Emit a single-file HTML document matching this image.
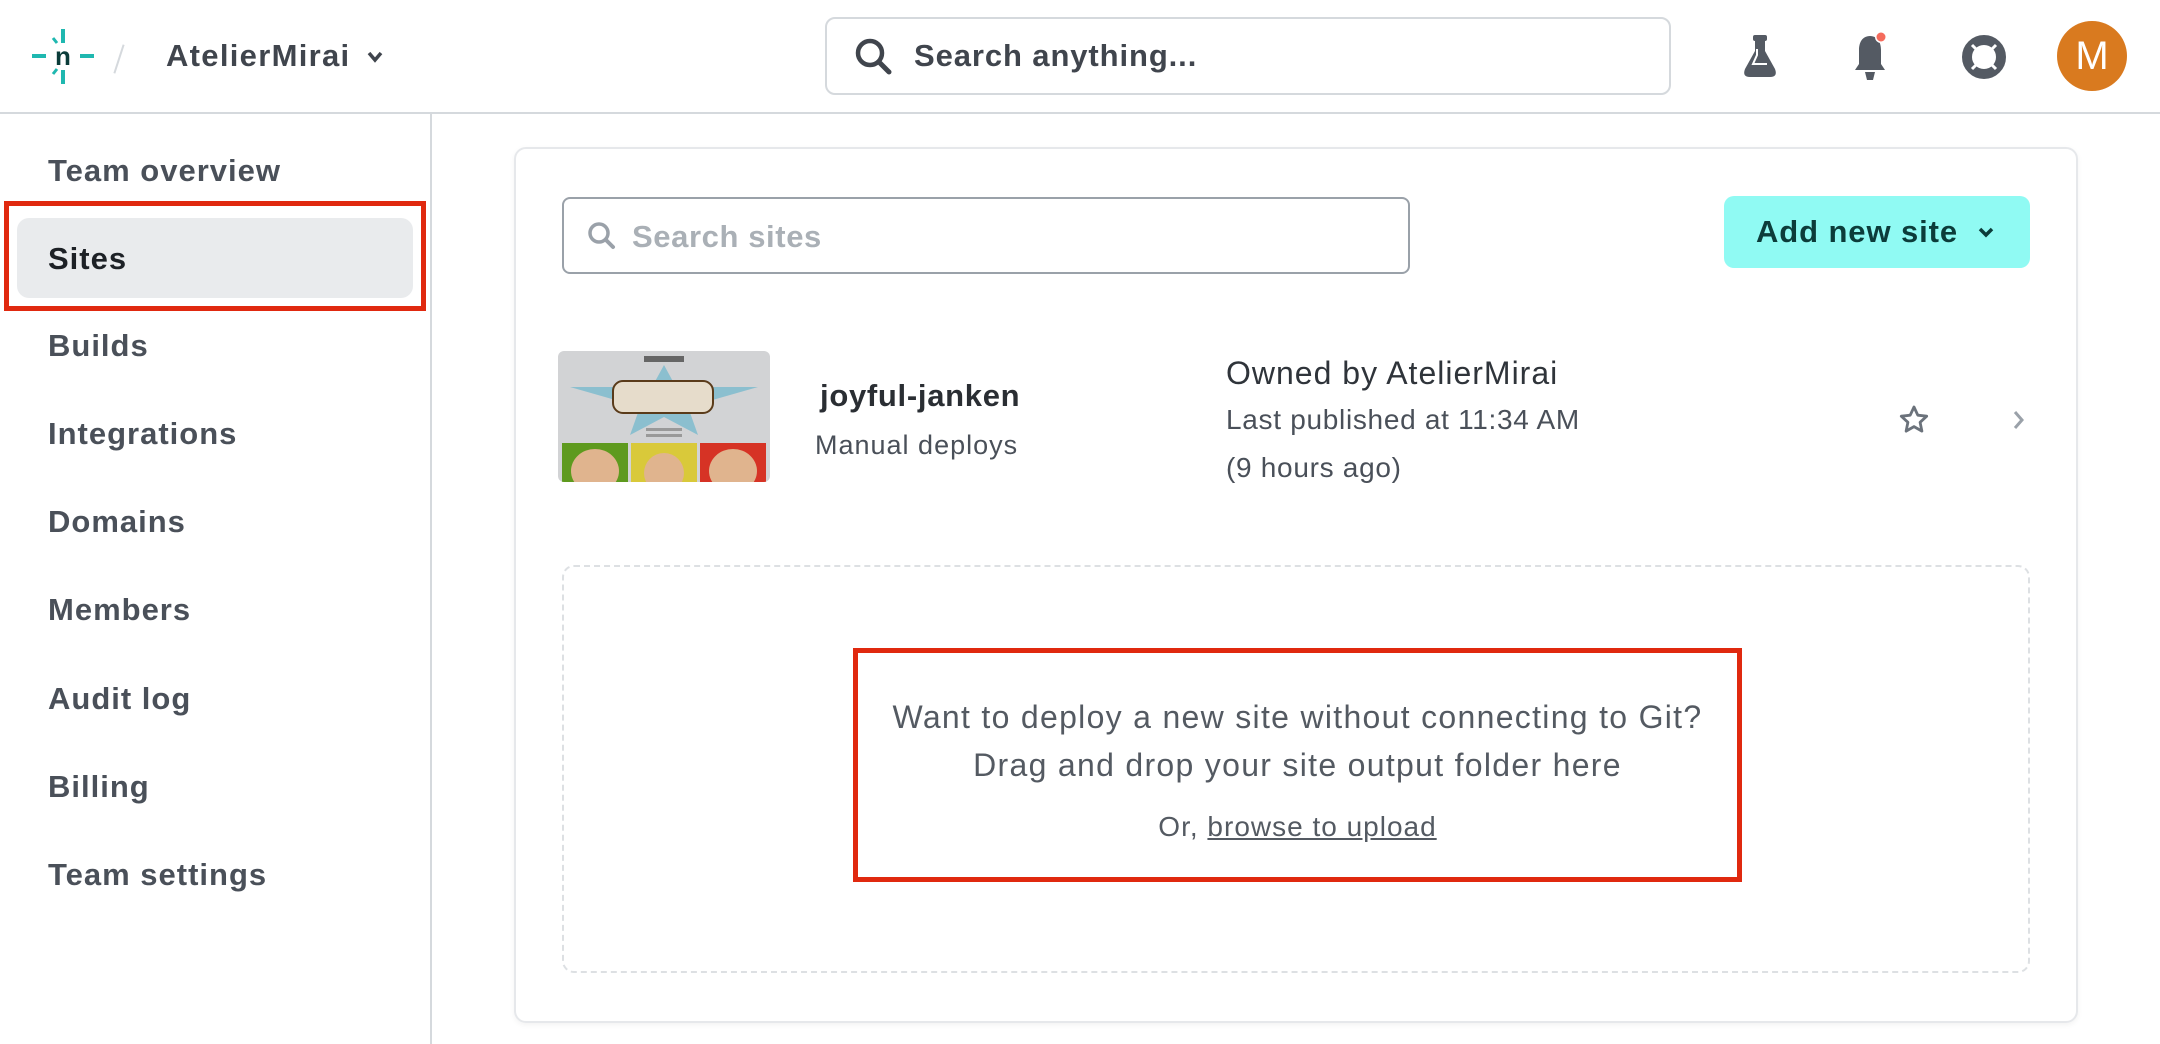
<!DOCTYPE html>
<html><head><meta charset="utf-8"><style>
*{margin:0;padding:0;box-sizing:border-box}
body{width:2160px;height:1044px;background:#fff;font-family:"Liberation Sans",sans-serif;position:relative;overflow:hidden;color:#4a5059}
.a{position:absolute;white-space:nowrap}
.nav{position:absolute;left:48px;font-size:31px;letter-spacing:1px;font-weight:bold;color:#4a5059;line-height:36px}
</style></head><body>
<!-- header -->
<div class="a" style="left:0;top:112px;width:2160px;height:2px;background:#d5d9dd"></div>
<svg class="a" style="left:30px;top:26px" width="66" height="60" viewBox="0 0 66 60">
<rect x="31" y="3" width="4" height="14" fill="#1fb8b0"/><rect x="31" y="44" width="4" height="14" fill="#1fb8b0"/>
<rect x="2" y="28" width="14" height="4" fill="#1fb8b0"/><rect x="50" y="28" width="14" height="4" fill="#1fb8b0"/>
<path d="M23 12l4 5M23 48l4-5" stroke="#1fb8b0" stroke-width="3"/>
<text x="33" y="39" text-anchor="middle" font-family="Liberation Sans" font-weight="bold" font-size="26" fill="#0b3c3a">n</text>
</svg>
<div class="a" style="left:118px;top:44px;width:2px;height:30px;background:#d5d9dd;transform:rotate(18deg)"></div>
<div class="a" style="left:166px;top:38px;font-size:31px;letter-spacing:1.3px;font-weight:bold;color:#40454d">AtelierMirai</div>
<svg class="a" style="left:366px;top:50px" width="18" height="14"><path d="M3 3l6 7 6-7" stroke="#40454d" stroke-width="3.5" fill="none"/></svg>
<div class="a" style="left:825px;top:17px;width:846px;height:78px;border:2px solid #d5d9dd;border-radius:10px"></div>
<svg class="a" style="left:852px;top:35px" width="44" height="44" viewBox="0 0 44 44"><circle cx="18" cy="18" r="12" stroke="#40454d" stroke-width="4.5" fill="none"/><path d="M27 27l10 10" stroke="#40454d" stroke-width="5" stroke-linecap="round"/></svg>
<div class="a" style="left:914px;top:38px;font-size:31px;letter-spacing:0.9px;font-weight:bold;color:#40454d">Search anything...</div>
<svg class="a" style="left:1738px;top:33px" width="44" height="46" viewBox="0 0 44 46"><rect x="15" y="2" width="14" height="6" rx="2" fill="#545a63"/><path d="M17 8h10v10l10 18q3 8-5 8H12q-8 0-5-8l10-18z" fill="#545a63"/><path d="M19 16v6l-4 9h14" stroke="#fff" stroke-width="2" fill="none"/></svg>
<svg class="a" style="left:1848px;top:30px" width="44" height="52" viewBox="0 0 44 52"><path d="M22 6c-8 0-11 7-11 14v14l-4 6h30l-4-6V20c0-7-3-14-11-14z" fill="#545a63"/><path d="M17 42h10l-2 8h-6z" fill="#545a63"/><circle cx="33" cy="7" r="6" fill="#fff"/><circle cx="33" cy="7" r="4.5" fill="#f56b5c"/></svg>
<svg class="a" style="left:1960px;top:33px" width="48" height="48" viewBox="0 0 48 48"><circle cx="24" cy="24" r="17" stroke="#545a63" stroke-width="10" fill="none"/><path d="M12 12l7 7M36 12l-7 7M12 36l7-7M36 36l-7-7" stroke="#fff" stroke-width="3"/></svg>
<div class="a" style="left:2057px;top:21px;width:70px;height:70px;border-radius:50%;background:#d97a1f;color:#fff;font-size:40px;text-align:center;line-height:70px">M</div>
<!-- sidebar -->
<div class="a" style="left:430px;top:114px;width:2px;height:930px;background:#d5d9dd"></div>
<div class="nav" style="top:153px">Team overview</div>
<div class="a" style="left:4px;top:201px;width:422px;height:110px;border:5px solid #e0290f"></div>
<div class="a" style="left:17px;top:218px;width:396px;height:80px;background:#e9ebed;border-radius:12px"></div>
<div class="nav" style="top:241px;color:#1d2126">Sites</div>
<div class="nav" style="top:328px">Builds</div>
<div class="nav" style="top:416px">Integrations</div>
<div class="nav" style="top:504px">Domains</div>
<div class="nav" style="top:592px">Members</div>
<div class="nav" style="top:681px">Audit log</div>
<div class="nav" style="top:769px">Billing</div>
<div class="nav" style="top:857px">Team settings</div>
<!-- card -->
<div class="a" style="left:514px;top:147px;width:1564px;height:876px;border:2px solid #e6e8eb;border-radius:12px;box-shadow:0 2px 6px rgba(0,0,0,.05)"></div>
<div class="a" style="left:562px;top:197px;width:848px;height:77px;border:2px solid #9aa1a9;border-radius:8px"></div>
<svg class="a" style="left:586px;top:220px" width="32" height="32" viewBox="0 0 32 32"><circle cx="13" cy="13" r="9" stroke="#9aa1a9" stroke-width="3.5" fill="none"/><path d="M20 20l7 7" stroke="#9aa1a9" stroke-width="4" stroke-linecap="round"/></svg>
<div class="a" style="left:632px;top:219px;font-size:31px;letter-spacing:0.6px;color:#aab0b6;font-weight:bold">Search sites</div>
<div class="a" style="left:1724px;top:196px;width:306px;height:72px;background:#90faf3;border-radius:10px"></div>
<div class="a" style="left:1756px;top:214px;font-size:31px;letter-spacing:0.9px;font-weight:bold;color:#0c3c3a">Add new site</div>
<svg class="a" style="left:1978px;top:226px" width="16" height="14"><path d="M2 3l6 6 6-6" stroke="#0c3c3a" stroke-width="3.5" fill="none"/></svg>
<!-- thumbnail -->
<svg class="a" style="left:558px;top:351px;border-radius:6px" width="212" height="131" viewBox="0 0 212 131">
<rect width="212" height="131" fill="#d2d3d5"/>
<rect x="86" y="5" width="40" height="6" fill="#666"/>
<polygon points="106,14 118,36 200,36 130,56 140,84 106,66 72,84 82,56 12,36 94,36" fill="#8bbfcf"/>
<rect x="55" y="30" width="100" height="32" rx="10" fill="#e6dccb" stroke="#5a3b1a" stroke-width="2"/>
<rect x="88" y="77" width="36" height="3" fill="#999"/><rect x="88" y="83" width="36" height="3" fill="#999"/>
<rect x="4" y="92" width="66" height="39" fill="#5e9a1e"/><rect x="73" y="92" width="66" height="39" fill="#d9c93a"/><rect x="142" y="92" width="66" height="39" fill="#d63325"/>
<ellipse cx="37" cy="120" rx="24" ry="22" fill="#e0b48e"/><ellipse cx="106" cy="122" rx="20" ry="20" fill="#e0b48e"/><ellipse cx="175" cy="120" rx="24" ry="22" fill="#e0b48e"/>
</svg>
<div class="a" style="left:820px;top:378px;font-size:31px;letter-spacing:0.7px;font-weight:bold;color:#2a2e33">joyful-janken</div>
<div class="a" style="left:815px;top:430px;font-size:27px;letter-spacing:1px;color:#4a5059">Manual deploys</div>
<div class="a" style="left:1226px;top:355px;font-size:32px;letter-spacing:1px;color:#2f343a">Owned by AtelierMirai</div>
<div class="a" style="left:1226px;top:404px;font-size:28px;letter-spacing:0.7px;color:#4a5059">Last published at 11:34 AM</div>
<div class="a" style="left:1226px;top:452px;font-size:28px;letter-spacing:0.7px;color:#4a5059">(9 hours ago)</div>
<svg class="a" style="left:1898px;top:404px" width="32" height="32" viewBox="0 0 32 32"><path d="M16 3l3.8 8.2 8.9 1-6.6 6.1 1.8 8.8L16 22.6l-7.9 4.5 1.8-8.8-6.6-6.1 8.9-1z" stroke="#6b727b" stroke-width="2.8" fill="none" stroke-linejoin="round"/></svg>
<svg class="a" style="left:2011px;top:409px" width="16" height="22"><path d="M4 3l7 8-7 8" stroke="#9aa1a9" stroke-width="3" fill="none"/></svg>
<!-- dropzone -->
<div class="a" style="left:562px;top:565px;width:1468px;height:408px;border:2px dashed #dde0e3;border-radius:12px"></div>
<div class="a" style="left:853px;top:648px;width:889px;height:234px;border:5px solid #e0290f"></div>
<div class="a" style="left:853px;top:699px;width:889px;text-align:center;font-size:32px;letter-spacing:1.3px;color:#545a62">Want to deploy a new site without connecting to Git?</div>
<div class="a" style="left:853px;top:747px;width:889px;text-align:center;font-size:32px;letter-spacing:1.3px;color:#545a62">Drag and drop your site output folder here</div>
<div class="a" style="left:853px;top:811px;width:889px;text-align:center;font-size:28px;letter-spacing:1px;color:#545a62">Or, <span style="text-decoration:underline">browse to upload</span></div>
</body></html>
